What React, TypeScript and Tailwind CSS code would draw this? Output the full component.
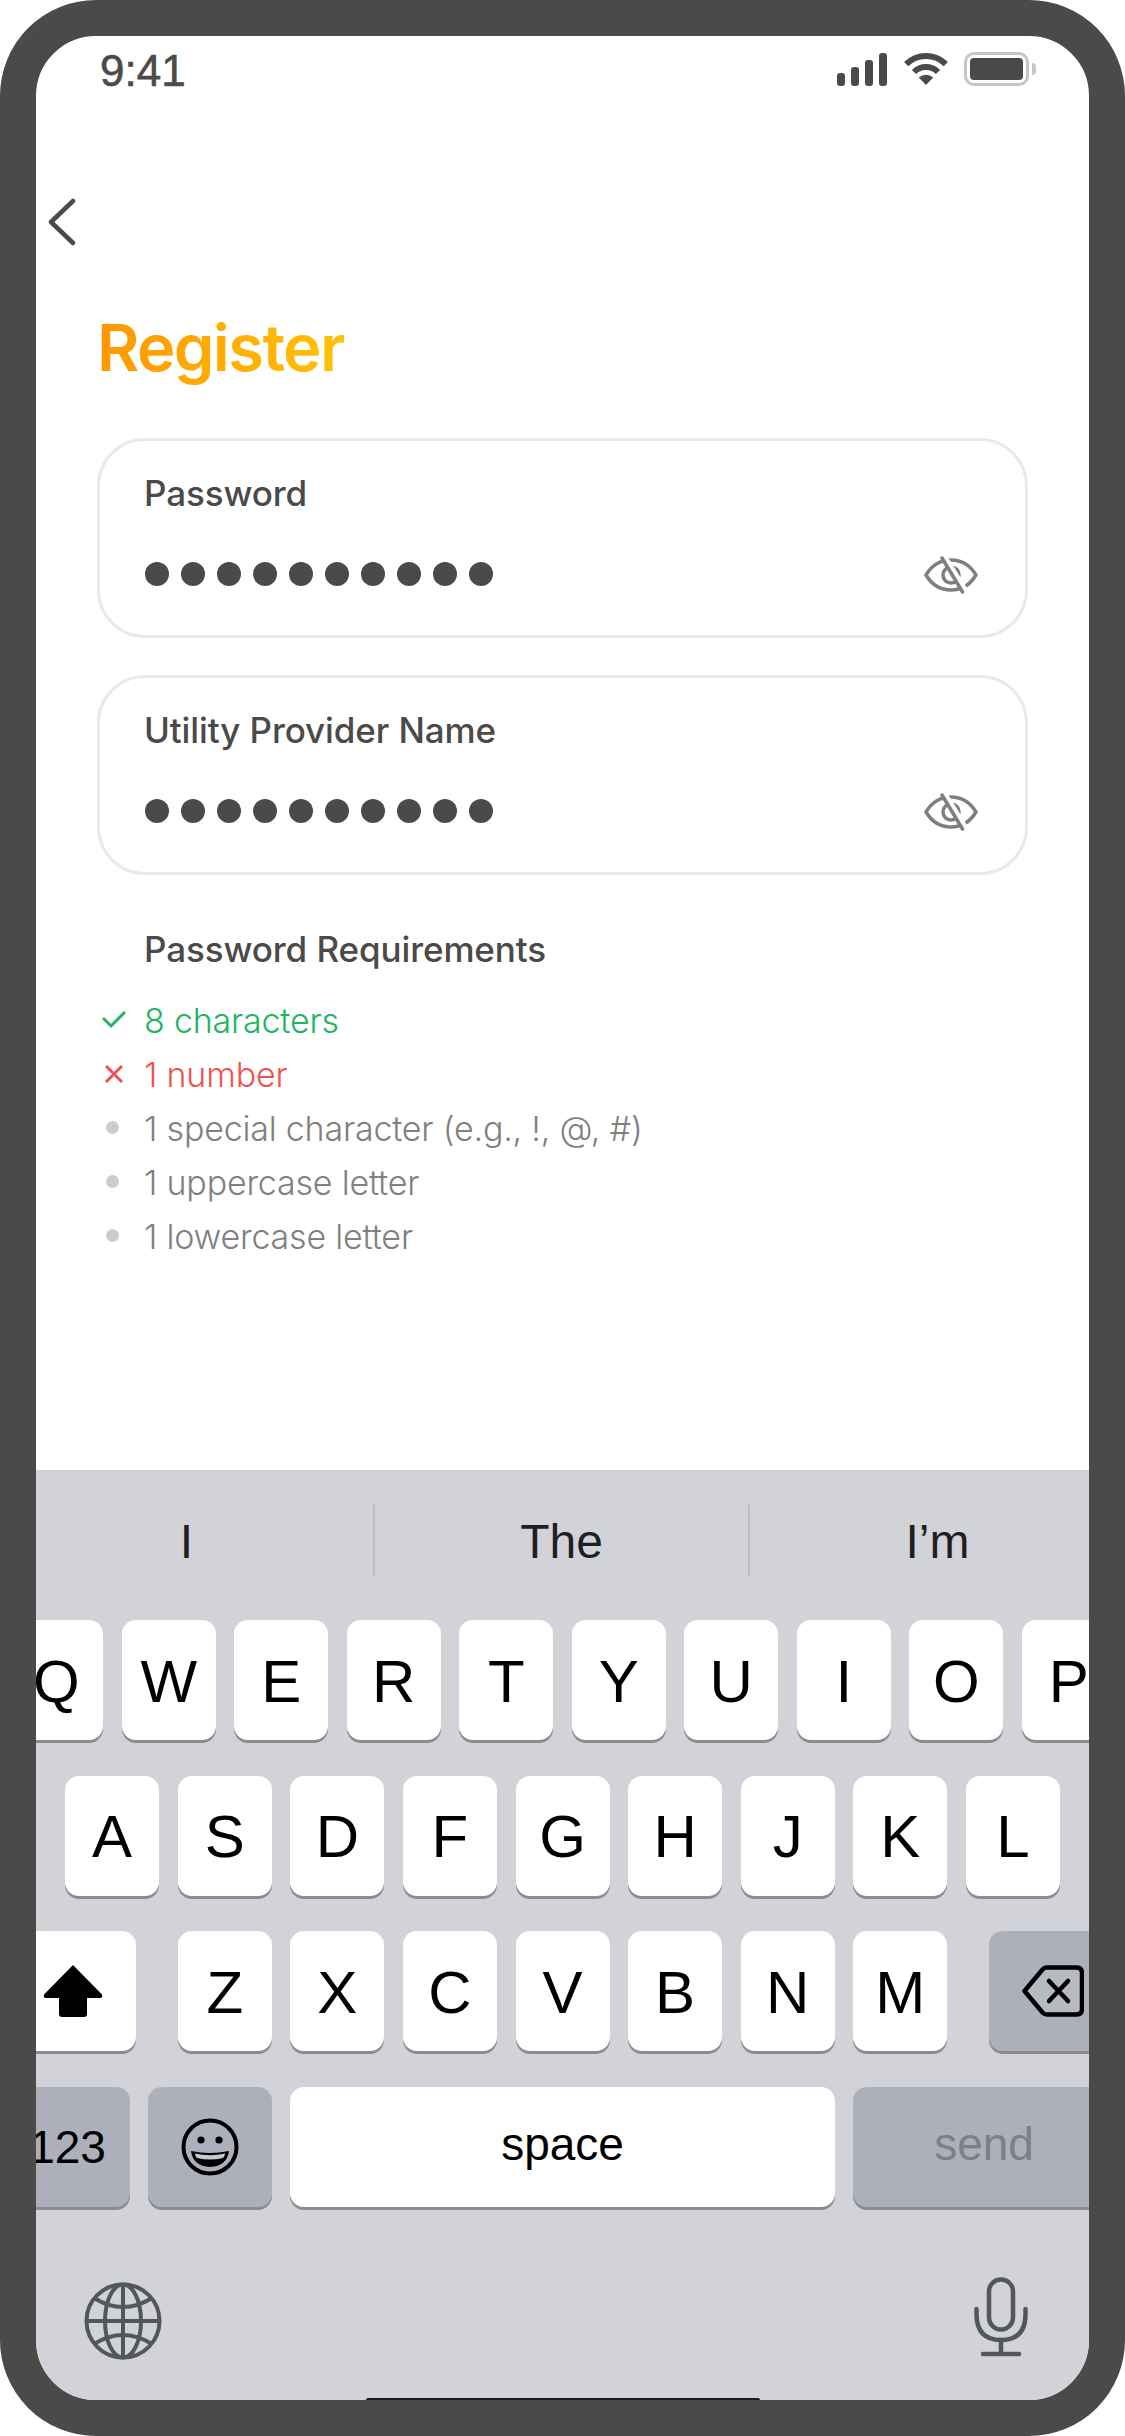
import React from "react";

const row1 = ["Q", "W", "E", "R", "T", "Y", "U", "I", "O", "P"];
const row2 = ["A", "S", "D", "F", "G", "H", "J", "K", "L"];
const row3 = ["Z", "X", "C", "V", "B", "N", "M"];

function Key({ label }: { label: string }) {
  return (
    <div className="w-[94px] h-[120px] shrink-0 rounded-[14px] bg-white shadow-[0_3px_0_#8b8c91] flex items-center justify-center pt-[3px] text-[60px] leading-none text-black font-['Liberation_Sans',sans-serif]">
      {label}
    </div>
  );
}

function EyeOff() {
  return (
    <svg width="54" height="38" viewBox="0 0 54 38" fill="none" stroke="#7f7f7f" strokeWidth="3.5" strokeLinecap="round" strokeLinejoin="round" className="shrink-0">
      <path d="M2 19C8 9 17 4 27 4C37 4 46 9 52 19C46 29 37 34 27 34C17 34 8 29 2 19Z" />
      <circle cx="27" cy="19" r="8" />
      <path d="M21 2L42 36" stroke="#ffffff" strokeWidth="6" strokeLinecap="butt" />
      <path d="M18 2L38.5 36" />
    </svg>
  );
}

function Field({ label }: { label: string }) {
  return (
    <div className="h-[200px] rounded-[48px] border-[3px] border-[#e8e8ee] pl-[45px] pr-[47px] pt-[32px]">
      <div className="-ml-[1px] text-[35px] leading-[40px] font-medium tracking-[-0.1px] text-[#4b4a49] font-['Inter',sans-serif]">{label}</div>
      <div className="mt-[43px] flex items-center justify-between h-[38px]">
        <div className="flex gap-[12px] -mt-[3px]">
          {Array.from({ length: 10 }).map((_, i) => (
            <span key={i} className="w-[24px] h-[24px] rounded-full bg-[#4b4a49]" />
          ))}
        </div>
        <EyeOff />
      </div>
    </div>
  );
}

function Req({ icon, text, color }: { icon: React.ReactNode; text: string; color: string }) {
  return (
    <div className="flex items-center h-[54px]">
      <div className="w-[47px] shrink-0 flex items-center justify-start pl-[5px]">{icon}</div>
      <span className={`text-[34px] leading-[54px] font-light tracking-[-0.2px] font-['Inter',sans-serif] ${color}`}>{text}</span>
    </div>
  );
}

const Dot = () => (
  <span className="ml-[4px] mb-[4px] block w-[13px] h-[13px] rounded-full bg-[#cccccc]" />
);

export default function App() {
  return (
    <div className="w-[1125px] h-[2436px] bg-white">
      <div className="w-full h-full rounded-[96px] border-[36px] border-[#4b4a49] overflow-hidden relative flex flex-col bg-white">
        <main className="h-[1434px] shrink-0">
          {/* Status bar */}
          <div className="flex justify-between items-start h-[54px] pl-[64px] pr-[53px] pt-[13px] text-[#4b4a49]">
            <span className="text-[44px] leading-[44px] font-['Liberation_Sans',sans-serif] [-webkit-text-stroke:0.6px_#4b4a49]">9:41</span>
            <div className="flex items-start gap-[16px] pt-[3px]">
              <svg width="50" height="33" viewBox="0 0 50 33" fill="#4b4a49" className="mt-[1px]">
                <rect x="0" y="20" width="8" height="13" rx="3" />
                <rect x="14" y="14" width="8" height="19" rx="3" />
                <rect x="28" y="7" width="8" height="26" rx="3" />
                <rect x="42" y="0" width="8" height="33" rx="3" />
              </svg>
              <svg width="46" height="33" viewBox="0 0 46 33" fill="none" stroke="#4b4a49" strokeWidth="6">
                <path d="M3.2 12.2A28 28 0 0 1 42.8 12.2" />
                <path d="M11 20A17 17 0 0 1 35 20" />
                <path d="M23 33L15.8 25.6A10.5 10.5 0 0 1 30.2 25.6Z" fill="#4b4a49" stroke="none" />
              </svg>
              <div className="flex items-center -ml-[1px]">
                <div className="w-[65px] h-[34px] rounded-[10px] border-[3px] border-[#c6c6c6] p-[3px]">
                  <div className="w-full h-full rounded-[4px] bg-[#4b4a49]" />
                </div>
                <div className="w-[4px] h-[12px] ml-[3px] rounded-r-full bg-[#c6c6c6]" />
              </div>
            </div>
          </div>

          {/* Back */}
          <div className="pt-[108px] pl-[12px]">
            <svg width="30" height="48" viewBox="0 0 30 48" fill="none" stroke="#4b4a49" strokeWidth="4.5" strokeLinecap="round" strokeLinejoin="round" className="block">
              <path d="M25 3L3 24L25 45" />
            </svg>
          </div>

          {/* Title */}
          <div className="pl-[61px] mt-[59px] h-[86px]">
            <h1 className="inline-block text-[65px] leading-[86px] font-semibold tracking-[-1.6px] bg-linear-to-r from-[#ff9800] to-[#ffc107] bg-clip-text text-transparent font-['Inter',sans-serif]">
              Register
            </h1>
          </div>

          {/* Fields */}
          <div className="mx-[61px] mt-[47px] flex flex-col gap-[37px]">
            <Field label="Password" />
            <Field label="Utility Provider Name" />
          </div>

          {/* Requirements */}
          <div className="ml-[61px] mt-[52px]">
            <div className="pl-[47px] text-[35px] leading-[44px] font-medium tracking-[-0.1px] text-[#4b4a49] font-['Inter',sans-serif]">
              Password Requirements
            </div>
            <div className="mt-[23px]">
              <Req
                color="text-[#22b45f]"
                text="8 characters"
                icon={
                  <svg width="24" height="18" viewBox="0 0 24 18" fill="none" stroke="#22b45f" strokeWidth="3" className="mb-[2px]">
                    <path d="M1 7L9 15L23 1" />
                  </svg>
                }
              />
              <Req
                color="text-[#ef5350]"
                text="1 number"
                icon={
                  <svg width="18" height="18" viewBox="0 0 18 18" fill="none" stroke="#ef5350" strokeWidth="3" className="ml-[3px] mb-[2px]">
                    <path d="M1 1L17 17M17 1L1 17" />
                  </svg>
                }
              />
              <Req color="text-[#808080]" text="1 special character (e.g., !, @, #)" icon={<Dot />} />
              <Req color="text-[#808080]" text="1 uppercase letter" icon={<Dot />} />
              <Req color="text-[#808080]" text="1 lowercase letter" icon={<Dot />} />
            </div>
          </div>
        </main>

        {/* Keyboard */}
        <section className="-mx-[36px] w-[1125px] flex-1 bg-[#d1d3d9] font-['Liberation_Sans',sans-serif]">
          <div className="h-[150px] flex pt-[35px]">
            <div className="w-[375px] h-[72px] flex items-center justify-center pt-[2px] text-[48px] text-[#1f1f1f] border-r-2 border-[#bcbec4]">I</div>
            <div className="w-[375px] h-[72px] flex items-center justify-center pt-[2px] text-[48px] text-[#1f1f1f] border-r-2 border-[#bcbec4]">The</div>
            <div className="w-[375px] h-[72px] flex items-center justify-center pt-[2px] text-[48px] text-[#1f1f1f]">I’m</div>
          </div>
          <div className="flex flex-col gap-[35.5px]">
            <div className="flex justify-center gap-[18.5px]">
              {row1.map((k) => <Key key={k} label={k} />)}
            </div>
            <div className="flex justify-center gap-[18.6px]">
              {row2.map((k) => <Key key={k} label={k} />)}
            </div>
            <div className="flex justify-between px-[10px]">
              <div className="w-[126px] h-[120px] rounded-[14px] bg-white shadow-[0_3px_0_#8b8c91] flex items-center justify-center">
                <svg width="60" height="52" viewBox="0 0 60 52" fill="#000000">
                  <path d="M30 0L59 29.5Q60 33 57 33H44V49Q44 52 41 52H19Q16 52 16 49V33H3Q0 33 1 29.5Z" />
                </svg>
              </div>
              <div className="flex gap-[18.6px]">
                {row3.map((k) => <Key key={k} label={k} />)}
              </div>
              <div className="w-[126px] h-[120px] rounded-[14px] bg-[#adb0bb] shadow-[0_3px_0_#8b8c91] flex items-center pl-[33px]">
                <svg width="62" height="52" viewBox="0 0 62 52" fill="none" stroke="#000000" strokeWidth="4.5" strokeLinejoin="round" strokeLinecap="round">
                  <path d="M2.5 26L21 4Q22.5 2.5 25 2.5H54Q60 2.5 60 8V44Q60 49.5 54 49.5H25Q22.5 49.5 21 48Z" fill="#c3c4c9" fillOpacity="0.5" />
                  <path d="M27 16L46 36M46 16L27 36" />
                </svg>
              </div>
            </div>
            <div className="flex gap-[18px] px-[10px]">
              <div className="w-[120px] h-[120px] rounded-[14px] bg-[#adb0bb] shadow-[0_3px_0_#8b8c91] flex items-center justify-center text-[46px] text-black pt-[2px] pr-[5px]">123</div>
              <div className="w-[124px] h-[120px] rounded-[14px] bg-[#adb0bb] shadow-[0_3px_0_#8b8c91] flex items-center justify-center">
                <svg width="58" height="58" viewBox="0 0 58 58">
                  <circle cx="29" cy="29" r="26.5" fill="none" stroke="#000000" strokeWidth="4" />
                  <circle cx="20" cy="22" r="3.6" fill="#000000" />
                  <circle cx="38" cy="22" r="3.6" fill="#000000" />
                  <path d="M10 33Q29 37 48 33Q46 48 29 49Q12 48 10 33Z" fill="#000000" />
                  <path d="M14 35.5Q29 39 44 35.5Q44 38 42 40Q29 43 16 40Q14 38 14 35.5Z" fill="#c9cbd2" />
                </svg>
              </div>
              <div className="w-[545px] h-[120px] rounded-[14px] bg-white shadow-[0_3px_0_#8b8c91] flex items-center justify-center text-[46px] text-black pb-[4px]">space</div>
              <div className="w-[262px] h-[120px] rounded-[14px] bg-[#adb0bb] shadow-[0_3px_0_#8b8c91] flex items-center justify-center text-[46px] text-[#7d8089] pb-[4px]">send</div>
            </div>
          </div>
          <div className="flex justify-between items-start mt-[70px] pl-[84px] pr-[97px]">
            <svg width="78" height="78" viewBox="0 0 78 78" fill="none" stroke="#54565e" strokeWidth="4" className="mt-[5px]">
              <circle cx="39" cy="39" r="36.5" />
              <ellipse cx="39" cy="39" rx="18" ry="36.5" />
              <path d="M39 2.5V75.5M2.5 39H75.5" />
              <path d="M10 16Q39 34 68 16" />
              <path d="M10 62Q39 44 68 62" />
            </svg>
            <svg width="54" height="80" viewBox="0 0 54 80" fill="none" stroke="#54565e" strokeWidth="4.5" strokeLinecap="round">
              <rect x="15" y="2.5" width="24" height="50" rx="12" />
              <path d="M2.5 32V37Q2.5 63 27 63Q51.5 63 51.5 37V32" />
              <path d="M27 63V77M9 77H45" />
            </svg>
          </div>
        </section>
        <div className="absolute bottom-0 left-[330px] w-[394px] h-[2px] rounded-t-full bg-[#1a1a1a]" />
      </div>
    </div>
  );
}
